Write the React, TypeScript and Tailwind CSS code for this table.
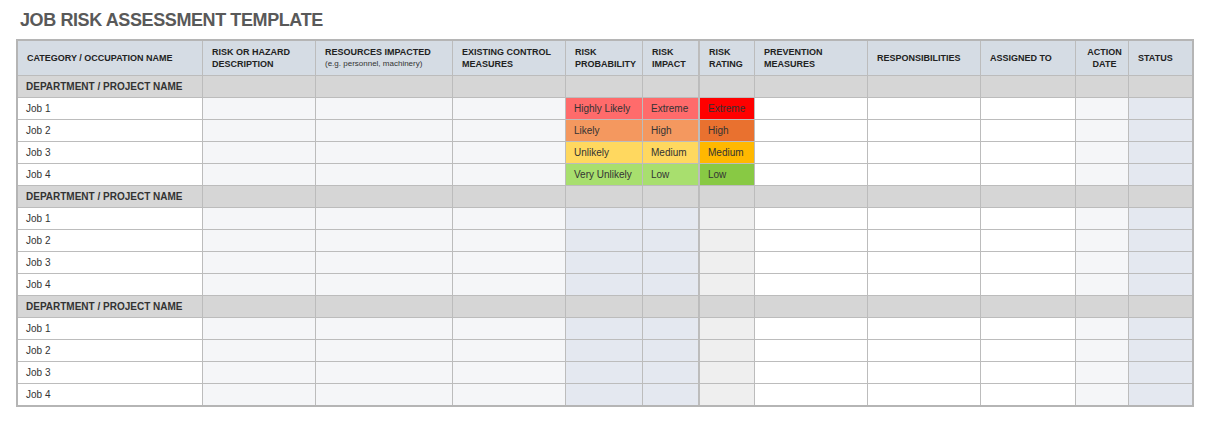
import React from 'react';

const FONT = { fontFamily: '"Liberation Sans", Arial, sans-serif' };

// column templates: widths measured from the template sheet
const COLS =
  'grid-cols-[184px_112px_136px_112px_76px_55px_55px_112px_112px_94px_52px_63px]';

// background per column for the ordinary job rows
const JOB_BG = [
  'bg-white',
  'bg-[#f5f6f8]',
  'bg-[#f5f6f8]',
  'bg-[#f5f6f8]',
  'bg-[#e4e8f0]',
  'bg-[#e4e8f0]',
  'bg-[#efefef]',
  'bg-white',
  'bg-white',
  'bg-white',
  'bg-[#f5f6f8]',
  'bg-[#e4e8f0]',
];

type Rating = { prob: string; impact: string; rating: string; pBg: string; iBg: string; rBg: string };

const RATINGS: Rating[] = [
  { prob: 'Highly Likely', impact: 'Extreme', rating: 'Extreme', pBg: 'bg-[#ff6b6b]', iBg: 'bg-[#ff6b6b]', rBg: 'bg-[#ff0000]' },
  { prob: 'Likely', impact: 'High', rating: 'High', pBg: 'bg-[#f4985f]', iBg: 'bg-[#f4985f]', rBg: 'bg-[#e9712f]' },
  { prob: 'Unlikely', impact: 'Medium', rating: 'Medium', pBg: 'bg-[#ffd85f]', iBg: 'bg-[#ffd85f]', rBg: 'bg-[#ffb800]' },
  { prob: 'Very Unlikely', impact: 'Low', rating: 'Low', pBg: 'bg-[#a8df6e]', iBg: 'bg-[#a8df6e]', rBg: 'bg-[#88c944]' },
];

function HeaderCell({ children, className = '' }: { children?: React.ReactNode; className?: string }) {
  return (
    <div
      className={`flex flex-col justify-center h-[34px] pl-[9px] pr-1 text-[9px] leading-[12px] font-bold text-[#222] bg-[#d5dce4] ${className}`}
    >
      {children}
    </div>
  );
}

function Cell({ children, className = '' }: { children?: React.ReactNode; className?: string }) {
  return (
    <div className={`flex items-center h-[21px] pl-[8px] text-[10px] text-[#333] whitespace-nowrap ${className}`}>
      {children}
    </div>
  );
}

function DeptRow() {
  return (
    <>
      <Cell className="bg-[#d6d6d6] font-bold text-[9px] text-[#222]">DEPARTMENT / PROJECT NAME</Cell>
      {JOB_BG.slice(1).map((_, i) => (
        <Cell key={i} className={`bg-[#d6d6d6] ${i === 5 ? 'border-l border-[#bdbdbd]' : ''}`} />
      ))}
    </>
  );
}

function JobRow({ name, rating }: { name: string; rating?: Rating }) {
  return (
    <>
      {JOB_BG.map((bg, i) => {
        let cls = bg;
        let text: string | undefined;
        if (i === 0) text = name;
        if (rating && i === 4) {
          cls = rating.pBg;
          text = rating.prob;
        }
        if (rating && i === 5) {
          cls = rating.iBg;
          text = rating.impact;
        }
        if (rating && i === 6) {
          cls = rating.rBg;
          text = rating.rating;
        }
        if (i === 6) cls += ' border-l border-[#bdbdbd]';
        return (
          <Cell key={i} className={cls}>
            {text}
          </Cell>
        );
      })}
    </>
  );
}

export default function App() {
  const groups = [true, false, false];
  return (
    <div className="w-[1213px] h-[432px] bg-white" style={FONT}>
      <h1 className="pl-[20px] pt-[10px] h-[39px] text-[18px] leading-[20px] font-bold text-[#595959] tracking-[-0.4px]">
        JOB RISK ASSESSMENT TEMPLATE
      </h1>
      <div className="ml-[16px] w-fit border-2 border-[#b5b5b5] bg-[#bcbcbc]">
        <div className={`grid ${COLS} gap-px`}>
          <HeaderCell>CATEGORY / OCCUPATION NAME</HeaderCell>
          <HeaderCell>
            <span>RISK OR HAZARD</span>
            <span>DESCRIPTION</span>
          </HeaderCell>
          <HeaderCell>
            <span>RESOURCES IMPACTED</span>
            <span className="font-normal text-[8px] text-[#333]">(e.g. personnel, machinery)</span>
          </HeaderCell>
          <HeaderCell>
            <span>EXISTING CONTROL</span>
            <span>MEASURES</span>
          </HeaderCell>
          <HeaderCell>
            <span>RISK</span>
            <span>PROBABILITY</span>
          </HeaderCell>
          <HeaderCell>
            <span>RISK</span>
            <span>IMPACT</span>
          </HeaderCell>
          <HeaderCell className="bg-[#c9c9c9] border-l border-[#bdbdbd]">
            <span>RISK</span>
            <span>RATING</span>
          </HeaderCell>
          <HeaderCell>
            <span>PREVENTION</span>
            <span>MEASURES</span>
          </HeaderCell>
          <HeaderCell>RESPONSIBILITIES</HeaderCell>
          <HeaderCell>ASSIGNED TO</HeaderCell>
          <HeaderCell className="items-center pl-0 pr-0 text-center">
            <span>ACTION</span>
            <span>DATE</span>
          </HeaderCell>
          <HeaderCell>STATUS</HeaderCell>

          {groups.map((withRatings, g) => (
            <React.Fragment key={g}>
              <DeptRow />
              {[1, 2, 3, 4].map((n) => (
                <JobRow key={n} name={`Job ${n}`} rating={withRatings ? RATINGS[n - 1] : undefined} />
              ))}
            </React.Fragment>
          ))}
        </div>
      </div>
    </div>
  );
}
